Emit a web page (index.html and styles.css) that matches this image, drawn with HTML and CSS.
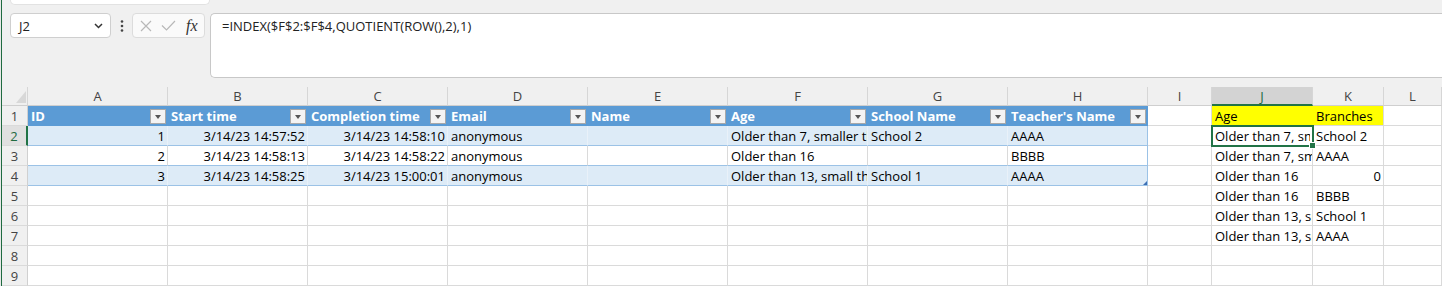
FILE: index.html
```html
<!DOCTYPE html>
<html>
<head>
<meta charset="utf-8">
<link rel="stylesheet" href="styles.css">
</head>
<body>
<div class="app">
  <div class="main">
    <div class="topstrip"><div class="ribbon-tail"></div></div>
    <div class="fbar">
      <div class="namebox">
        <span>J2</span>
        <svg width="9" height="6" viewBox="0 0 9 6"><path d="M1 1 L4.5 4.5 L8 1" fill="none" stroke="#333" stroke-width="1.5"/></svg>
      </div>
      <div class="dots">
        <svg width="4" height="12" viewBox="0 0 4 12"><circle cx="2" cy="1.5" r="1.3" fill="#444"/><circle cx="2" cy="6" r="1.3" fill="#444"/><circle cx="2" cy="10.5" r="1.3" fill="#444"/></svg>
      </div>
      <div class="fbtns">
        <svg width="12" height="12" viewBox="0 0 12 12"><path d="M1 1 L11 11 M11 1 L1 11" stroke="#b8b8b8" stroke-width="1.2"/></svg>
        <svg width="15" height="11" viewBox="0 0 15 11"><path d="M1 5.5 L5.5 10 L14 1" fill="none" stroke="#b8b8b8" stroke-width="1.2"/></svg>
        <span class="fx">fx</span>
      </div>
      <div class="formula">=INDEX($F$2:$F$4,QUOTIENT(ROW(),2),1)</div>
    </div>

    <div class="sheet">
      <!-- column headers -->
      <div class="c hd corner"><svg width="10" height="12" viewBox="0 0 10 12"><polygon points="10,0 10,12 0,12" fill="#d8d8d8"/></svg></div>
      <div class="c hd">A</div>
      <div class="c hd">B</div>
      <div class="c hd">C</div>
      <div class="c hd">D</div>
      <div class="c hd">E</div>
      <div class="c hd">F</div>
      <div class="c hd">G</div>
      <div class="c hd">H</div>
      <div class="c hd">I</div>
      <div class="c hd act">J</div>
      <div class="c hd">K</div>
      <div class="c hd">L</div>

      <!-- row 1 -->
      <div class="c rh">1</div>
      <div class="c th"><span>ID</span><span class="dd"></span></div>
      <div class="c th"><span>Start time</span><span class="dd"></span></div>
      <div class="c th"><span>Completion time</span><span class="dd"></span></div>
      <div class="c th"><span>Email</span><span class="dd"></span></div>
      <div class="c th"><span>Name</span><span class="dd"></span></div>
      <div class="c th"><span>Age</span><span class="dd"></span></div>
      <div class="c th"><span>School Name</span><span class="dd"></span></div>
      <div class="c th last"><span>Teacher's Name</span><span class="dd"></span></div>
      <div class="c"></div>
      <div class="c y">Age</div>
      <div class="c y">Branches</div>
      <div class="c"></div>

      <!-- row 2 -->
      <div class="c rh act">2</div>
      <div class="c tb band r">1</div>
      <div class="c tb band r">3/14/23 14:57:52</div>
      <div class="c tb band r">3/14/23 14:58:10</div>
      <div class="c tb band">anonymous</div>
      <div class="c tb band"></div>
      <div class="c tb band">Older than 7, smaller than 13</div>
      <div class="c tb band">School 2</div>
      <div class="c tb band last">AAAA</div>
      <div class="c"></div>
      <div class="c sel"><span class="clip">Older than 7, smaller than 13</span></div>
      <div class="c">School 2</div>
      <div class="c"></div>

      <!-- row 3 -->
      <div class="c rh">3</div>
      <div class="c tb r">2</div>
      <div class="c tb r">3/14/23 14:58:13</div>
      <div class="c tb r">3/14/23 14:58:22</div>
      <div class="c tb">anonymous</div>
      <div class="c tb"></div>
      <div class="c tb">Older than 16</div>
      <div class="c tb"></div>
      <div class="c tb last">BBBB</div>
      <div class="c"></div>
      <div class="c">Older than 7, smaller than 13</div>
      <div class="c">AAAA</div>
      <div class="c"></div>

      <!-- row 4 -->
      <div class="c rh">4</div>
      <div class="c tb band r">3</div>
      <div class="c tb band r">3/14/23 14:58:25</div>
      <div class="c tb band r">3/14/23 15:00:01</div>
      <div class="c tb band">anonymous</div>
      <div class="c tb band"></div>
      <div class="c tb band">Older than 13, small than 16</div>
      <div class="c tb band">School 1</div>
      <div class="c tb band last corner-h">AAAA</div>
      <div class="c"></div>
      <div class="c">Older than 16</div>
      <div class="c r">0</div>
      <div class="c"></div>

      <!-- row 5 -->
      <div class="c rh">5</div>
      <div class="c"></div><div class="c"></div><div class="c"></div><div class="c"></div>
      <div class="c"></div><div class="c"></div><div class="c"></div><div class="c"></div>
      <div class="c"></div>
      <div class="c">Older than 16</div>
      <div class="c">BBBB</div>
      <div class="c"></div>

      <!-- row 6 -->
      <div class="c rh">6</div>
      <div class="c"></div><div class="c"></div><div class="c"></div><div class="c"></div>
      <div class="c"></div><div class="c"></div><div class="c"></div><div class="c"></div>
      <div class="c"></div>
      <div class="c">Older than 13, small than 16</div>
      <div class="c">School 1</div>
      <div class="c"></div>

      <!-- row 7 -->
      <div class="c rh">7</div>
      <div class="c"></div><div class="c"></div><div class="c"></div><div class="c"></div>
      <div class="c"></div><div class="c"></div><div class="c"></div><div class="c"></div>
      <div class="c"></div>
      <div class="c">Older than 13, small than 16</div>
      <div class="c">AAAA</div>
      <div class="c"></div>

      <!-- row 8 -->
      <div class="c rh">8</div>
      <div class="c"></div><div class="c"></div><div class="c"></div><div class="c"></div>
      <div class="c"></div><div class="c"></div><div class="c"></div><div class="c"></div>
      <div class="c"></div><div class="c"></div><div class="c"></div><div class="c"></div>

      <!-- row 9 -->
      <div class="c rh">9</div>
      <div class="c"></div><div class="c"></div><div class="c"></div><div class="c"></div>
      <div class="c"></div><div class="c"></div><div class="c"></div><div class="c"></div>
      <div class="c"></div><div class="c"></div><div class="c"></div><div class="c"></div>
    </div>
  </div>
</div>
</body>
</html>
```

FILE: styles.css
```css
html, body {
  margin: 0;
  padding: 0;
  background: #f0f0f0;
  overflow: hidden;
}

.app {
  width: 1442px;
  height: 286px;
  border-left: 1px solid #e8e8e8;
  box-sizing: border-box;
  background: #f0f0f0;
}

.main {
  border-left: 1px solid #1f6b40;
  height: 100%;
  box-sizing: border-box;
}

.topstrip {
  height: 13px;
}

.ribbon-tail {
  margin-left: 8px;
  width: 200px;
  height: 5px;
  background: #fff;
  border: 1px solid #e2e2e2;
  border-top: none;
  border-radius: 0 0 5px 5px;
  box-sizing: border-box;
}

.fbar {
  display: flex;
  align-items: flex-start;
  height: 65px;
  margin-bottom: 9px;
  font-family: "Open Sans", "Noto Sans", sans-serif;
  font-size: 13px;
  color: #222;
}

.namebox {
  margin-left: 8px;
  width: 101px;
  height: 25px;
  box-sizing: border-box;
  background: #fff;
  border: 1px solid #cfcfcf;
  border-radius: 4px;
  display: flex;
  align-items: center;
  justify-content: space-between;
  padding: 0 7px 0 8px;
}

.dots {
  width: 21px;
  height: 25px;
  display: flex;
  align-items: center;
  justify-content: center;
}

.fbtns {
  width: 73px;
  height: 25px;
  box-sizing: border-box;
  background: #fafafa;
  border: 1px solid #dcdcdc;
  border-radius: 4px;
  display: flex;
  align-items: center;
  gap: 9px;
  padding-left: 7px;
}

.fx {
  font-family: "Liberation Serif", "DejaVu Serif", serif;
  font-style: italic;
  font-size: 16px;
  color: #333;
  margin-left: 1px;
  line-height: 1;
}

.formula {
  margin-left: 5px;
  flex: 1;
  height: 65px;
  box-sizing: border-box;
  background: #fff;
  border: 1px solid #c8c8c8;
  border-right: none;
  border-radius: 5px 0 0 5px;
  padding: 4px 11px;
  line-height: 17px;
}

.sheet {
  display: grid;
  grid-template-columns: 26px repeat(8, 140px) 64px 101px 71px 1fr;
  grid-template-rows: 19px;
  grid-auto-rows: 20px;
  font-family: "Open Sans", "Noto Sans", sans-serif;
  font-size: 13px;
  color: #000;
}

.c {
  box-sizing: border-box;
  border-right: 1px solid #dadada;
  border-bottom: 1px solid #dadada;
  background: #fff;
  overflow: hidden;
  white-space: nowrap;
  padding: 1px 2px 0 3px;
  line-height: 19px;
}

.hd {
  background: #f0f0f0;
  color: #444;
  text-align: center;
  line-height: 18px;
  border-right-color: #d6d6d6;
  border-bottom-color: #cfcfcf;
  padding: 0;
}

.hd.act {
  background: #d3d3d3;
  color: #1f6b40;
  border-bottom: 2px solid #217346;
}

.corner {
  display: flex;
  align-items: flex-end;
  justify-content: flex-end;
  padding: 0 1px 2px 0;
}

.rh {
  background: #f0f0f0;
  color: #444;
  text-align: center;
  padding: 1px 0 0;
  border-right-color: #d0d0d0;
  border-bottom-color: #dadada;
}

.rh.act {
  background: #e0e0e0;
  color: #1f6b40;
  border-right: 2px solid #217346;
}

.th {
  background: #5b9bd5;
  color: #fff;
  font-weight: 700;
  border-right-color: #5b9bd5;
  border-bottom-color: #5b9bd5;
  display: flex;
  align-items: center;
  justify-content: space-between;
  padding: 0 1px 0 3px;
}

.th span:first-child {
  overflow: hidden;
  padding-top: 1px;
}

.dd {
  flex: none;
  width: 16px;
  height: 15px;
  box-sizing: border-box;
  border: 1px solid #a8a8a8;
  background: #f3f3f3;
  position: relative;
  margin-top: 2px;
}

.dd::after {
  content: "";
  position: absolute;
  left: 4px;
  top: 5px;
  border-left: 3.5px solid transparent;
  border-right: 3.5px solid transparent;
  border-top: 4px solid #555;
}

.tb {
  border-bottom-color: #9bc2e6;
}

.band {
  background: #ddebf7;
  border-right-color: #e9f1f9;
}

.last {
  border-right-color: #9bc2e6;
}

.th.last {
  border-right-color: #5b9bd5;
}

.corner-h {
  position: relative;
}

.corner-h::after {
  content: "";
  position: absolute;
  right: 0;
  bottom: 0;
  border-left: 4px solid transparent;
  border-bottom: 4px solid #3c6fb4;
}

.r {
  text-align: right;
}

.y {
  background: #ffff00;
  border-right-color: #ffff00;
}

.y + .y {
  border-right-color: #dadada;
}

.sel {
  position: relative;
  z-index: 2;
  overflow: visible;
  outline: 2px solid #217346;
  outline-offset: -1px;
}

.sel .clip {
  display: block;
  overflow: hidden;
}

.sel::after {
  content: "";
  position: absolute;
  right: -4px;
  bottom: -4px;
  width: 5px;
  height: 5px;
  background: #217346;
  border: 1px solid #fff;
}
```
